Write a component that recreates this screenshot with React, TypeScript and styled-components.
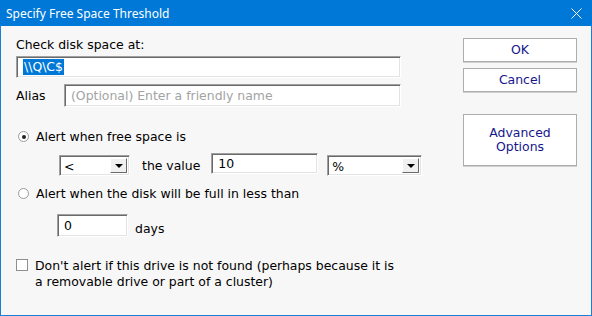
import React from 'react'
import styled, { createGlobalStyle } from 'styled-components'

const Global = createGlobalStyle`
  html, body {
    margin: 0;
    padding: 0;
    background: #f7f7f7;
  }
  * {
    box-sizing: border-box;
  }
`

const Window = styled.div`
  width: 592px;
  height: 316px;
  border: 1px solid #1c7fd6;
  border-top: none;
  background: #f7f7f7;
  display: flex;
  flex-direction: column;
  font-family: 'DejaVu Sans', Verdana, sans-serif;
  font-size: 12.45px;
  color: #000;
`

const TitleBar = styled.div`
  height: 26px;
  margin: 0 -1px;
  background: #0078d7;
  color: #fff;
  display: flex;
  align-items: center;
  justify-content: space-between;
  padding: 0 10px 0 6px;
  font-family: 'Noto Sans', sans-serif;
  font-size: 12px;
`

const Close = styled.svg`
  width: 11px;
  height: 11px;
`

const Body = styled.div`
  flex: 1;
  display: flex;
  padding: 11px 14px 0 15px;
`

const Left = styled.div`
  width: 385px;
  display: flex;
  flex-direction: column;
`

const Right = styled.div`
  margin-left: auto;
  width: 114px;
  display: flex;
  flex-direction: column;
  padding-top: 1px;
`

const Label = styled.div`
  line-height: 15px;
`

const Row = styled.div<{ $top?: number; $indent?: number }>`
  display: flex;
  align-items: center;
  margin-top: ${({ $top }) => $top ?? 0}px;
  padding-left: ${({ $indent }) => $indent ?? 0}px;
  white-space: nowrap;
`

const Field = styled.div<{ $w?: number; $h?: number; $placeholder?: boolean }>`
  width: ${({ $w }) => ($w ? `${$w}px` : '100%')};
  height: ${({ $h }) => $h ?? 22}px;
  flex-shrink: 0;
  background: #fff;
  border: 1px solid;
  border-color: #a0a0a0 #fff #fff #a0a0a0;
  box-shadow: inset 1px 1px #6a6a6a, inset -1px -1px #e3e3e3;
  display: flex;
  align-items: center;
  padding-left: 6px;
  color: ${({ $placeholder }) => ($placeholder ? '#a3a3a3' : '#000')};
  white-space: nowrap;
  overflow: hidden;
`

const Selected = styled.span`
  background: #0078d7;
  color: #fff;
  padding: 0 1px 1px;
`

const Select = styled.div<{ $w: number }>`
  width: ${({ $w }) => $w}px;
  height: 21px;
  flex-shrink: 0;
  background: #fff;
  border: 1px solid;
  border-color: #a0a0a0 #fff #fff #a0a0a0;
  box-shadow: inset 1px 1px #6a6a6a, inset -1px -1px #e3e3e3;
  display: flex;
  align-items: center;
  padding: 2px 2px 2px 4px;
`

const SelectValue = styled.span`
  flex: 1;
  padding-top: 2px;
`

const SelectButton = styled.div`
  width: 17px;
  height: 100%;
  background: #f0f0f0;
  border: 1px solid;
  border-color: #fff #696969 #696969 #fff;
  display: flex;
  align-items: center;
  justify-content: center;
  &::after {
    content: '';
    border-left: 4px solid transparent;
    border-right: 4px solid transparent;
    border-top: 4px solid #000;
  }
`

const Radio = styled.span<{ $checked?: boolean }>`
  width: 11px;
  height: 11px;
  border-radius: 50%;
  border: 1px solid #9a9a9a;
  background: #fff;
  margin: 0 7px 0 2px;
  display: flex;
  align-items: center;
  justify-content: center;
  &::after {
    content: '';
    width: 4px;
    height: 4px;
    border-radius: 50%;
    background: ${({ $checked }) => ($checked ? '#222' : 'transparent')};
  }
`

const Check = styled.span`
  width: 12px;
  height: 12px;
  border: 1px solid #8f8f8f;
  background: #fff;
  margin: 1px 7px 0 0;
  flex-shrink: 0;
`

const Text = styled.span<{ $left?: number }>`
  margin-left: ${({ $left }) => $left ?? 0}px;
  line-height: 15px;
`

const CheckRow = styled.div`
  display: flex;
  align-items: flex-start;
  margin-top: 21px;
  line-height: 15.5px;
`

const Button = styled.div<{ $h?: number; $top?: number }>`
  height: ${({ $h }) => $h ?? 24}px;
  margin-top: ${({ $top }) => $top ?? 0}px;
  background: #fff;
  border: 1px solid #adadad;
  box-shadow: 0 1px 0 #cfcfcf;
  color: #16168c;
  display: flex;
  align-items: center;
  justify-content: center;
  text-align: center;
  line-height: 14px;
`

const App: React.FC = () => {
  return (
    <Window>
      <Global />
      <TitleBar>
        <span>Specify Free Space Threshold</span>
        <Close viewBox="0 0 11 11">
          <path d="M0.5 0.5 L10.5 10.5 M10.5 0.5 L0.5 10.5" stroke="#fff" strokeWidth="1" />
        </Close>
      </TitleBar>
      <Body>
        <Left>
          <Label>Check disk space at:</Label>
          <Row $top={4}>
            <Field>
              <Selected>\\Q\C$</Selected>
            </Field>
          </Row>
          <Row $top={6}>
            <Text>Alias</Text>
            <Field $w={337} $h={23} $placeholder style={{ marginLeft: 'auto' }}>
              (Optional) Enter a friendly name
            </Field>
          </Row>
          <Row $top={22}>
            <Radio $checked />
            <Text>Alert when free space is</Text>
          </Row>
          <Row $top={11} $indent={43}>
            <Select $w={71}>
              <SelectValue>&lt;</SelectValue>
              <SelectButton />
            </Select>
            <Text $left={12}>the value</Text>
            <Field $w={107} $h={21} style={{ marginLeft: 11, marginTop: -4 }}>
              10
            </Field>
            <Select $w={95} style={{ marginLeft: 9 }}>
              <SelectValue>%</SelectValue>
              <SelectButton />
            </Select>
          </Row>
          <Row $top={10}>
            <Radio />
            <Text>Alert when the disk will be full in less than</Text>
          </Row>
          <Row $top={13} $indent={41}>
            <Field $w={71} $h={23}>
              0
            </Field>
            <Text $left={7} style={{ marginTop: 5 }}>days</Text>
          </Row>
          <CheckRow>
            <Check />
            <span>
              Don't alert if this drive is not found (perhaps because it is
              <br />
              a removable drive or part of a cluster)
            </span>
          </CheckRow>
        </Left>
        <Right>
          <Button>OK</Button>
          <Button $top={6}>Cancel</Button>
          <Button $top={22} $h={52}>
            Advanced
            <br />
            Options
          </Button>
        </Right>
      </Body>
    </Window>
  )
}

export default App
